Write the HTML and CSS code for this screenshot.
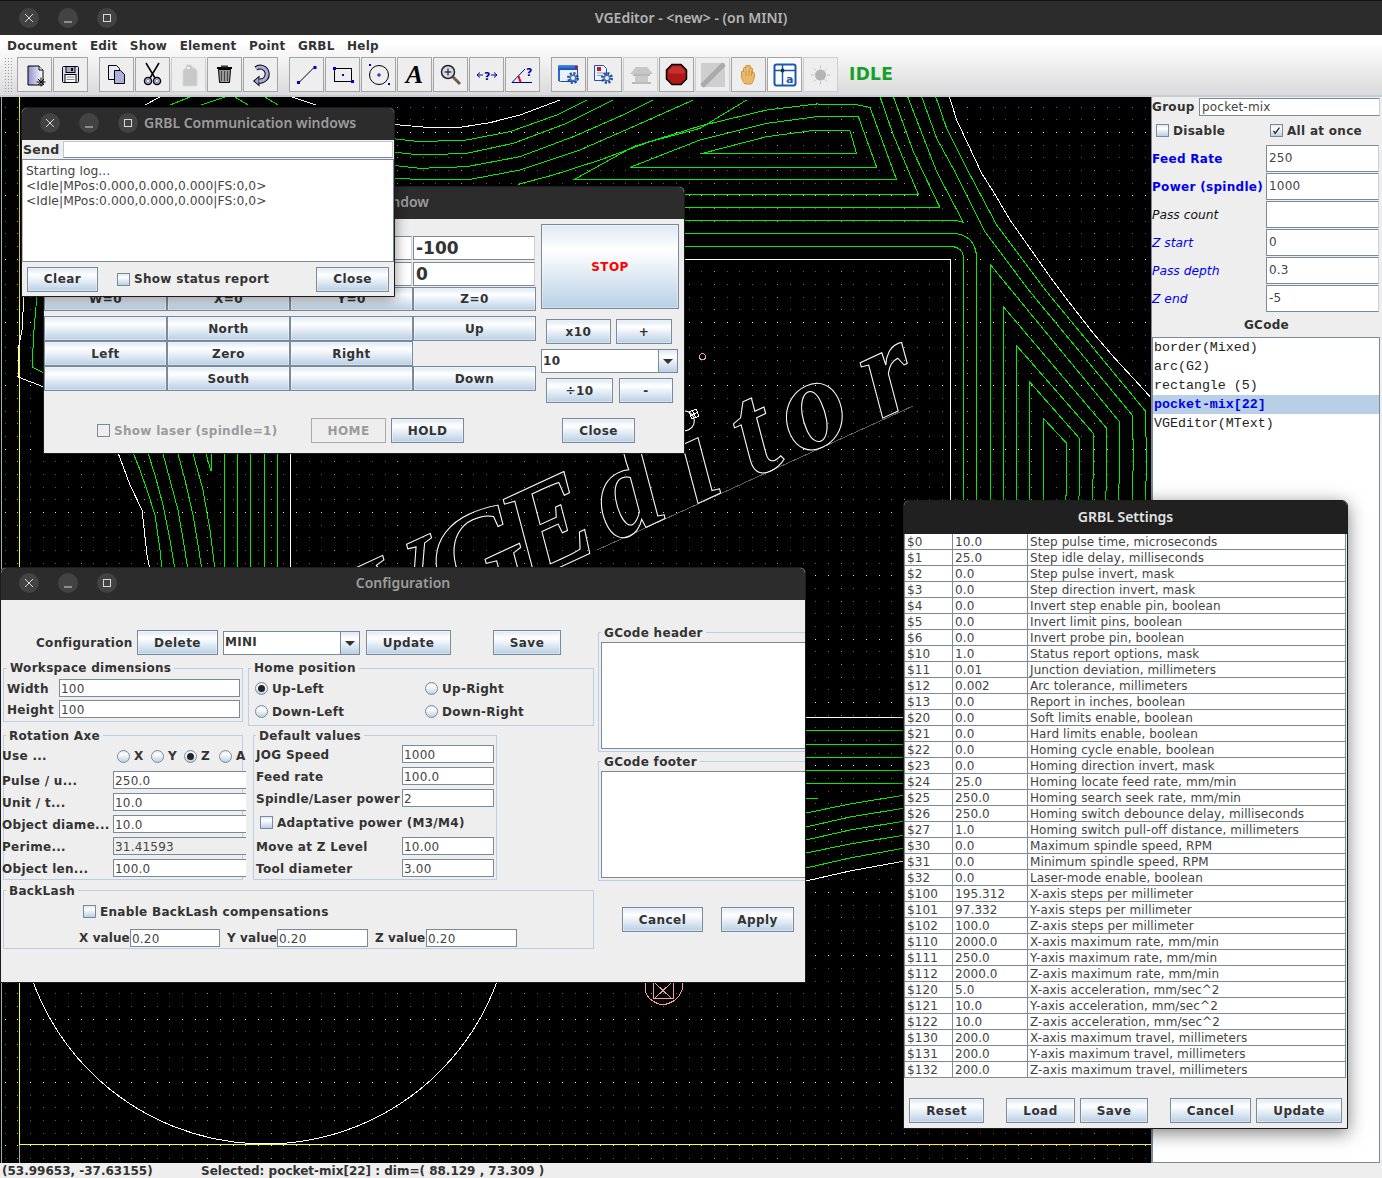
FILE: index.html
```html
<!DOCTYPE html>
<html lang="en">
<head>
<meta charset="utf-8">
<title>VGEditor</title>
<link rel="stylesheet" href="styles.css">
</head>
<body>
<div class="app">
  <svg class="defs" aria-hidden="true">
    <defs>
      <linearGradient id="lav" x1="0" y1="0" x2="1" y2="0"><stop offset="0" stop-color="#8f8fd0"/><stop offset="1" stop-color="#ffffff"/></linearGradient>
      <linearGradient id="blu" x1="0" y1="0" x2="0" y2="1"><stop offset="0" stop-color="#4a90e8"/><stop offset="1" stop-color="#1448b8"/></linearGradient>
      <pattern id="grid" patternUnits="userSpaceOnUse" x="144" y="132" width="38" height="38">
        <g class="dot-dim">
          <rect x="0" y="0" width="1" height="1"/><rect x="13" y="0" width="1" height="1"/><rect x="25" y="0" width="1" height="1"/>
          <rect x="0" y="13" width="1" height="1"/><rect x="13" y="13" width="1" height="1"/><rect x="25" y="13" width="1" height="1"/>
          <rect x="0" y="25" width="1" height="1"/><rect x="13" y="25" width="1" height="1"/><rect x="25" y="25" width="1" height="1"/>
        </g>
      </pattern>
      <pattern id="gridrows" patternUnits="userSpaceOnUse" x="144" y="132" width="38" height="190">
        <g class="dot-hi">
          <rect x="0" y="0" width="1" height="1"/><rect x="13" y="0" width="1" height="1"/><rect x="25" y="0" width="1" height="1"/>
          <rect x="0" y="63" width="1" height="1"/><rect x="13" y="63" width="1" height="1"/><rect x="25" y="63" width="1" height="1"/>
          <rect x="0" y="127" width="1" height="1"/><rect x="13" y="127" width="1" height="1"/><rect x="25" y="127" width="1" height="1"/>
        </g>
      </pattern>
      <pattern id="gridcols" patternUnits="userSpaceOnUse" x="144" y="132" width="190" height="38">
        <g class="dot-mid">
          <rect x="0" y="0" width="1" height="1"/><rect x="0" y="13" width="1" height="1"/><rect x="0" y="25" width="1" height="1"/>
          <rect x="63" y="0" width="1" height="1"/><rect x="63" y="13" width="1" height="1"/><rect x="63" y="25" width="1" height="1"/>
          <rect x="127" y="0" width="1" height="1"/><rect x="127" y="13" width="1" height="1"/><rect x="127" y="25" width="1" height="1"/>
        </g>
      </pattern>
    </defs>
  </svg>

  <header class="titlebar main-title">
    <div class="wbtns">
      <span class="wbtn"><svg viewBox="0 0 20 20"><path d="M6 6l8 8M14 6l-8 8"/></svg></span>
      <span class="wbtn"><svg viewBox="0 0 20 20"><path d="M6 14h8"/></svg></span>
      <span class="wbtn"><svg viewBox="0 0 20 20"><rect x="6.500" y="6.500" width="7" height="7"/></svg></span>
    </div>
    <div class="wtitle">VGEditor - &lt;new&gt; - (on MINI)</div>
    <div></div>
  </header>

  <div class="chrome">
    <nav class="menubar">
      <span>Document</span><span>Edit</span><span>Show</span><span>Element</span><span>Point</span><span>GRBL</span><span>Help</span>
    </nav>
    <div class="toolbar">
      <div class="grip"></div>
      <div class="tgroup">
        <button class="tool"><svg viewBox="0 0 33 33"><path d="M10 8h11l4 4v15H10z" fill="url(#lav)" stroke="#000"/><path d="M21 8v4h4" fill="#fff" stroke="#000"/><path d="M23 19.500v9M18.500 24h9M20 21l6 6M26 21l-6 6" stroke="#000" fill="none"/></svg></button>
        <button class="tool"><svg viewBox="0 0 33 33"><path d="M8.500 9.500a1 1 0 0 1 1-1h14a1 1 0 0 1 1 1v14a1 1 0 0 1-1 1h-14a1 1 0 0 1-1-1z" fill="#dcdcec" stroke="#000"/><rect x="12" y="8.500" width="9" height="6" fill="#a8a8d0" stroke="#000"/><rect x="17" y="10" width="2" height="3" fill="#000"/><rect x="11" y="16.500" width="11" height="8" fill="#fff" stroke="#000"/><path d="M12.500 19h8M12.500 21.500h8" stroke="#888"/></svg></button>
      </div>
      <div class="tgroup">
        <button class="tool"><svg viewBox="0 0 33 33"><path d="M8.500 7.500h8l3 3v11h-11z" fill="#e8e8f4" stroke="#000"/><path d="M14.500 12.500h6l4 4v9h-10z" fill="#b0b0dc" stroke="#000"/></svg></button>
        <button class="tool"><svg viewBox="0 0 33 33"><path d="M10 5l9 15M23 5l-9 15" stroke="#000" stroke-width="1.500" fill="none"/><circle cx="12" cy="23" r="3.500" fill="none" stroke="#000" stroke-width="1.500"/><circle cx="21" cy="23" r="3.500" fill="none" stroke="#000" stroke-width="1.500"/><circle cx="12" cy="23" r="1.800" fill="none" stroke="#7878c8"/><circle cx="21" cy="23" r="1.800" fill="none" stroke="#7878c8"/></svg></button>
        <button class="tool off"><svg viewBox="0 0 33 33"><path d="M14 7h5l2 3h2l2 3v14a1 1 0 0 1-1 1h-12a1 1 0 0 1-1-1v-14l2-3h2z" fill="#c8c8c8" stroke="#d8d8d8"/><rect x="15" y="9" width="3" height="2" fill="#eee"/></svg></button>
        <button class="tool"><svg viewBox="0 0 33 33"><rect x="9" y="9" width="15" height="2" fill="#000"/><rect x="13" y="7.500" width="7" height="2" fill="#333"/><path d="M10.500 11.500h12l-1 13h-10z" fill="#999" stroke="#000"/><path d="M13.500 13v10M16.500 13v10M19.500 13v10" stroke="#444"/></svg></button>
        <button class="tool"><svg viewBox="0 0 33 33"><path d="M12 10.500a7 7 0 1 1 3 12.500" fill="none" stroke="#000" stroke-width="5"/><path d="M15.500 17.500v11l-6.500-5.500z" fill="#000"/><path d="M12 10.500a7 7 0 1 1 3 12.500" fill="none" stroke="#a8a8dc" stroke-width="3"/><path d="M14.500 19.500v7l-4-3.500z" fill="#a8a8dc"/></svg></button>
      </div>
      <div class="tgroup">
        <button class="tool"><svg viewBox="0 0 33 33"><path d="M9 24.500L24 9.500" stroke="#000" fill="none"/><rect x="7" y="23" width="3" height="3" fill="#00c"/><rect x="23.500" y="8" width="3" height="3" fill="#00c"/></svg></button>
        <button class="tool"><svg viewBox="0 0 33 33"><rect x="8.500" y="10.500" width="17" height="13" fill="none" stroke="#000"/><rect x="7" y="9" width="3" height="3" fill="#00c"/><rect x="25" y="22" width="3" height="3" fill="#00c"/><rect x="16" y="16" width="2" height="2" fill="#00c"/></svg></button>
        <button class="tool"><svg viewBox="0 0 33 33"><circle cx="17" cy="17" r="9.500" fill="none" stroke="#000"/><rect x="7" y="6" width="2" height="2" fill="#00c"/><rect x="26" y="25" width="2" height="2" fill="#00c"/><path d="M15 17h4M17 15v4" stroke="#00c"/></svg></button>
        <button class="tool"><span class="glyph-a">A</span></button>
        <button class="tool"><svg viewBox="0 0 33 33"><path d="M19 19l7 7" stroke="#7a5848" stroke-width="3" fill="none"/><circle cx="14" cy="14" r="6.500" fill="#d8d8ec" stroke="#222" stroke-width="1.500"/><path d="M10.500 14h7M14 10.500v7" stroke="#000" fill="none"/></svg></button>
        <button class="tool"><svg viewBox="0 0 33 33"><path d="M7 17h6M7 17l3-2.500M7 17l3 2.500M21 17h6M27 17l-3-2.500M27 17l-3 2.500" stroke="#009" fill="none"/><text x="14" y="22" class="svg-q">?</text></svg></button>
        <button class="tool"><svg viewBox="0 0 33 33"><path d="M6 24.500h20M6 24.500L19 11" stroke="#009" fill="none"/><path d="M12.500 18l2 6" stroke="#e00" stroke-width="2" fill="none"/><text x="20" y="18" class="svg-q">?</text></svg></button>
      </div>
      <div class="tgroup">
        <button class="tool"><svg viewBox="0 0 33 33"><rect x="6.500" y="7.500" width="19" height="16" rx="2" fill="#eaf2ff" stroke="#1448b8"/><rect x="6" y="7" width="20" height="5" rx="1" fill="url(#blu)"/><rect x="23" y="8" width="2.500" height="2.500" fill="#d00"/><rect x="6" y="12" width="2" height="11" fill="#2a68d0"/><circle cx="21" cy="20" r="4.500" fill="none" stroke="#2c4c88" stroke-width="3" stroke-dasharray="2 1.500"/><circle cx="21" cy="20" r="2.800" fill="#e8f0fa" stroke="#4070c0" stroke-width="1.500"/></svg></button>
        <button class="tool"><svg viewBox="0 0 33 33"><path d="M6.500 7.500h9l3 3v12h-12z" fill="#eef2ff" stroke="#2050a8"/><rect x="9" y="9" width="4" height="4" fill="#d01818"/><path d="M9 15h7M9 17.500h6" stroke="#88a0d0"/><circle cx="19" cy="20" r="4.500" fill="none" stroke="#2c4c88" stroke-width="3" stroke-dasharray="2 1.500"/><circle cx="19" cy="20" r="2.800" fill="#e8f0fa" stroke="#4070c0" stroke-width="1.500"/></svg></button>
        <button class="tool off"><svg viewBox="0 0 33 33"><path d="M6 16l6-7h11l6 7z" fill="#c6c6c6"/><rect x="9" y="16" width="17" height="2" fill="#b8b8b8"/><rect x="11" y="18" width="13" height="8" fill="#cacaca"/><rect x="8" y="24" width="19" height="2" fill="#bbb"/></svg></button>
        <button class="tool"><svg viewBox="0 0 33 33"><path d="M12 6.500h9l5.500 5.500v9l-5.500 5.500h-9L6.500 21v-9z" fill="#b01818" stroke="#000" stroke-width="1.500"/><path d="M12.500 8.500h8l4 4v3H8.500v-3z" fill="#c83030"/></svg></button>
        <button class="tool off"><svg viewBox="0 0 33 33"><rect x="5" y="5" width="24" height="24" fill="#cecece"/><path d="M6 28L28 6" stroke="#aaa" stroke-width="5" fill="none"/></svg></button>
        <button class="tool"><svg viewBox="0 0 33 33"><path d="M13 26c-2-2-3.500-5-3.500-8v-4a1 1 0 0 1 2 0v-3.500a1 1 0 0 1 2 0V8.500a1.200 1.200 0 0 1 2.500 0v0a1.200 1.200 0 0 1 2.500 0V11a1 1 0 0 1 2 0v4.500a1 1 0 0 1 2 0c.3 4-1 7.500-3 10.500z" fill="#eab868" stroke="#c89848"/><path d="M14 13v5M17 12v6M19.500 13v5" stroke="#c89848" fill="none"/></svg></button>
        <button class="tool face"><svg viewBox="0 0 33 33"><rect x="6.500" y="6.500" width="21" height="21" rx="2" fill="#fff" stroke="#1a58b0" stroke-width="2"/><path d="M6 12.500h22M14.500 7v20" stroke="#1a58b0" fill="none" stroke-width="1.500"/><circle cx="14.500" cy="12.500" r="2" fill="#234"/><text x="18" y="25" class="svg-a">a</text></svg></button>
        <button class="tool off"><svg viewBox="0 0 33 33"><circle cx="16.500" cy="17" r="5.500" fill="#b4b4b4"/><path d="M16.500 7.500v3M16.500 23.500v3M7 17h3M23 17h3M10 10.500l2 2M21 21.500l2 2M23 10.500l-2 2M12 21.500l-2 2" stroke="#c0c0c0" fill="none"/></svg></button>
      </div>
      <div class="idle">IDLE</div>
    </div>
  </div>

  <main class="work">
    <div class="canvas">
      <svg class="drawing" viewBox="0 97 1151 1066" width="1151" height="1066">
        <rect x="0" y="97" width="1151" height="1066" fill="#000"/>
        <rect x="0" y="97" width="1151" height="1066" fill="url(#grid)"/>
        <rect x="0" y="97" width="1151" height="1066" fill="url(#gridcols)"/>
        <rect x="0" y="97" width="1151" height="1066" fill="url(#gridrows)"/>
        <path class="frame" d="M1.500 97V1163"/>
        <path class="axis" d="M19.500 97V1144.500H1151"/>
        <path class="frame" d="M19.500 1145V1163"/>

        <!-- pocket: upper edge, traced on a 3x grid -->
        <g transform="translate(400 100) scale(.33333)">
          <path class="w" d="M-30 72L0 75L80 82L180 82L270 68L360 45L480 0"/>
          <path class="g" d="M-30 115L60 125L200 120L330 95L470 45L560 0"/>
          <path class="g" d="M-30 155L60 165L200 160L340 130L500 70L640 0"/>
          <path class="g" d="M-30 195L60 205L200 200L360 170L520 110L680 40L760 0"/>
          <path class="g" d="M-30 236L200 240L360 210L540 150L700 80L880 0"/>
          <path class="g" d="M355 253L460 225L600 180L750 125L900 85L1040 0"/>
          <path class="g" d="M520 240H1490L1410 22L1370 14L1250 12L1100 30L900 78L700 140L520 240"/>
          <path class="g" d="M690 202H1430L1375 50L1250 50L1100 70L900 120L690 202"/>
          <path class="g" d="M900 162H1370L1350 92L1250 90L1100 110L900 162"/>
        </g>

        <!-- pocket: right side, traced on a 3x grid -->
        <g transform="translate(680 95) scale(.33333)">
          <path class="w" d="M808 5L830 75L870 160L905 235L940 290L990 375L1050 460L1110 545L1170 625L1240 715L1300 785L1360 850L1410 905"/>
          <path class="w" d="M0 495H812V1250"/>
          <path class="g" d="M0 455H820Q850 460 850 490V1250"/>
          <path class="g" d="M0 415H820Q888 420 890 490V1250"/>
          <path class="g" d="M0 377H830L850 382L770 230L683 5"/>
          <path class="g" d="M0 338H780L700 170L640 5"/>
          <path class="g" d="M0 298H715L640 120L600 5"/>
          <path class="g" d="M725 5L770 130L830 240L915 410L1050 590L1358 962L1360 1100L1355 1250"/>
          <path class="g" d="M767 5L800 100L860 220L950 390L1100 590L1396 948L1400 1100L1395 1250"/>
          <path class="g" d="M932 1250V510L1318 980V1130L1315 1250"/>
          <path class="g" d="M970 1250V635L1280 1000V1150L1275 1250"/>
          <path class="g" d="M1010 1250V752L1240 1015V1130L1235 1250"/>
          <path class="g" d="M1050 1250V862L1200 1032V1140L1195 1250"/>
          <path class="g" d="M1090 1250V970L1160 1045V1170L1155 1250"/>
        </g>

        <!-- pocket: lower edge between the windows -->
        <path class="w" d="M800 717H910"/>
        <path class="g" d="M800 730H910M800 744H910M800 757H910M800 770H910M800 783H910M806 798H818"/>
        <path class="g" d="M806 813L850 804L905 795M806 827L850 817L905 808M806 840L850 830L905 821M806 853L850 844L905 835M806 868L850 858L905 848"/>
        <path class="w" d="M806 881L850 871L905 861"/>

        <!-- pocket: left edge -->
        <path class="w" d="M117 450L130 485L142 510L147 555L150 570"/>
        <path class="g" d="M132 450L140 470L147 490L155 515L160 550L162 570"/>
        <path class="g" d="M147 450L155 475L163 505L170 540L175 570"/>
        <path class="g" d="M162 450L170 480L178 510L184 545L188 570"/>
        <path class="g" d="M177 450L185 480L193 515L198 545L202 570"/>
        <path class="g" d="M192 450L203 490L210 530L215 570"/>
        <path class="g" d="M205 450L211 471V450"/>
        <path class="g" d="M224 450V570M237 450V570M250 450V570M264 450V570M277 450V570"/>
        <path class="w" d="M290 450V570"/>
        <path class="w" d="M24 295L22 330L19 345L18 377L44 387"/>
        <path class="g" d="M37 295L34 330L32 367L44 373"/>
        <path class="w" d="M145 105L160 97M292 97L316 105"/>
        <path class="g" d="M170 105L190 97M201 105L225 97M235 97L248 105M265 97L278 105"/>

        <!-- text element -->
        <path class="base" d="M597 550L913 406"/>
        <text class="mtext" transform="translate(597 550) rotate(-24.8)" x="-240 -160 -78 18 108 172 222 312">VGEditor</text>

        <!-- arc element -->
        <circle class="w" cx="265" cy="897" r="247"/>

        <!-- markers -->
        <circle class="pink" cx="702.500" cy="356.500" r="3"/>
        <path class="w" d="M689 412L696 409L699 416L692 419zM692.500 410.500L695.500 417.500M690.500 415.500L697.500 412.500"/>
        <path class="pink" d="M645 983V990Q648 1002 663 1005Q678 1002 682 990V983"/>
        <path class="pink" d="M653 983V998H673V983M655 983L671 998M671 983L655 998"/>
      </svg>
    </div>

    <aside class="panel">
      <div class="group-row"><span class="lbl">Group</span><div class="field grp">pocket-mix</div></div>
      <div class="check-row">
        <span class="check-item"><span class="chk"></span><span class="lbl">Disable</span></span>
        <span class="check-item"><span class="chk on"><svg viewBox="0 0 13 13"><path d="M3 7l2 3 5-7" fill="none" stroke="#222" stroke-width="1.500"/></svg></span><span class="lbl">All at once</span></span>
      </div>
      <div class="props">
        <span class="lbl blue">Feed Rate</span><div class="field pf">250</div>
        <span class="lbl blue">Power (spindle)</span><div class="field pf">1000</div>
        <span class="ital">Pass count</span><div class="field pf"></div>
        <span class="ital blue">Z start</span><div class="field pf">0</div>
        <span class="ital blue">Pass depth</span><div class="field pf">0.3</div>
        <span class="ital blue">Z end</span><div class="field pf">-5</div>
      </div>
      <div class="gc-head lbl">GCode</div>
      <ul class="gc-list">
        <li>border(Mixed)</li>
        <li>arc(G2)</li>
        <li>rectangle (5)</li>
        <li class="sel">pocket-mix[22]</li>
        <li>VGEditor(MText)</li>
      </ul>
    </aside>
  </main>

  <footer class="status">
    <span class="st-pos">(53.99653, -37.63155)</span>
    <span>Selected: pocket-mix[22] : dim=( 88.129 , 73.309 )</span>
  </footer>

  <!-- Jog window -->
  <section class="win jog">
    <div class="titlebar">
      <div class="wtitle off jog-title">GRBL Jogging control window</div>
    </div>
    <div class="jog-main">
      <div class="jog-left">
        <div class="jog-grid jog-fields">
          <div class="field big"></div><div class="field big"></div><div class="field big"></div><div class="field big">-100</div>
          <div class="field big"></div><div class="field big"></div><div class="field big"></div><div class="field big">0</div>
        </div>
        <div class="jog-grid zero-row">
          <button class="btn">W=0</button><button class="btn">X=0</button><button class="btn">Y=0</button><button class="btn">Z=0</button>
        </div>
        <div class="jog-grid pad-rows">
          <button class="btn"></button><button class="btn">North</button><button class="btn"></button><button class="btn">Up</button>
          <button class="btn">Left</button><button class="btn">Zero</button><button class="btn">Right</button><span></span>
          <button class="btn"></button><button class="btn">South</button><button class="btn"></button><button class="btn">Down</button>
        </div>
      </div>
      <div class="jog-right">
        <button class="btn stop">STOP</button>
        <div class="step-row"><button class="btn w65">x10</button><button class="btn w56">+</button></div>
        <div class="combo jog-combo"><span class="combo-val">10</span><span class="combo-arrow"></span></div>
        <div class="step-row"><button class="btn w67">÷10</button><button class="btn w54">-</button></div>
      </div>
    </div>
    <div class="jog-bottom">
      <span class="check-item dis"><span class="chk plain"></span><span class="lbl">Show laser (spindle=1)</span></span>
      <button class="btn dis w75">HOME</button>
      <button class="btn w73">HOLD</button>
      <button class="btn w73">Close</button>
    </div>
  </section>

  <!-- Configuration window -->
  <section class="win config">
    <div class="titlebar center">
      <div class="wbtns">
        <span class="wbtn"><svg viewBox="0 0 20 20"><path d="M6 6l8 8M14 6l-8 8"/></svg></span>
        <span class="wbtn"><svg viewBox="0 0 20 20"><path d="M6 14h8"/></svg></span>
        <span class="wbtn"><svg viewBox="0 0 20 20"><rect x="6.500" y="6.500" width="7" height="7"/></svg></span>
      </div>
      <div class="wtitle off">Configuration</div>
      <div></div>
    </div>
    <div class="cfg-body">
      <div class="cfg-left">
        <div class="cfg-top">
          <span class="lbl cfg-lbl">Configuration</span>
          <button class="btn w81">Delete</button>
          <div class="combo cfg-combo"><span class="combo-val">MINI</span><span class="combo-arrow"></span></div>
          <button class="btn w85">Update</button>
          <button class="btn w68 save">Save</button>
        </div>
        <div class="cfg-row r1">
          <div class="fs wksp">
            <div class="legend">Workspace dimensions</div>
            <div class="wksp-grid">
              <span class="lbl">Width</span><div class="field sf">100</div>
              <span class="lbl">Height</span><div class="field sf">100</div>
            </div>
          </div>
          <div class="fs home">
            <div class="legend">Home position</div>
            <div class="home-grid">
              <span class="check-item"><span class="rad on"></span><span class="lbl">Up-Left</span></span>
              <span class="check-item"><span class="rad"></span><span class="lbl">Up-Right</span></span>
              <span class="check-item"><span class="rad"></span><span class="lbl">Down-Left</span></span>
              <span class="check-item"><span class="rad"></span><span class="lbl">Down-Right</span></span>
            </div>
          </div>
        </div>
        <div class="cfg-row r2">
          <div class="fs rot">
            <div class="legend">Rotation Axe</div>
            <div class="rot-grid">
              <span class="lbl use">Use ...</span>
              <div class="axes">
                <span class="check-item ax34"><span class="rad"></span><span class="lbl">X</span></span>
                <span class="check-item ax33"><span class="rad"></span><span class="lbl">Y</span></span>
                <span class="check-item ax35"><span class="rad on"></span><span class="lbl">Z</span></span>
                <span class="check-item"><span class="rad"></span><span class="lbl">A</span></span>
              </div>
              <span class="lbl">Pulse / u...</span><div class="field sf open">250.0</div>
              <span class="lbl">Unit / t...</span><div class="field sf open">10.0</div>
              <span class="lbl">Object diame...</span><div class="field sf open">10.0</div>
              <span class="lbl">Perime...</span><div class="field sf open ro">31.41593</div>
              <span class="lbl">Object len...</span><div class="field sf open">100.0</div>
            </div>
          </div>
          <div class="fs defv">
            <div class="legend">Default values</div>
            <div class="def-grid">
              <span class="lbl">JOG Speed</span><div class="field sf">1000</div>
              <span class="lbl">Feed rate</span><div class="field sf">100.0</div>
              <span class="lbl">Spindle/Laser power</span><div class="field sf">2</div>
              <span class="check-item adapt"><span class="chk"></span><span class="lbl">Adaptative power (M3/M4)</span></span>
              <span class="lbl">Move at Z Level</span><div class="field sf">10.00</div>
              <span class="lbl">Tool diameter</span><div class="field sf">3.00</div>
            </div>
          </div>
        </div>
        <div class="fs back">
          <div class="legend">BackLash</div>
          <div class="back-check"><span class="check-item"><span class="chk"></span><span class="lbl">Enable BackLash compensations</span></span></div>
          <div class="back-vals">
            <span class="lbl">X value</span><div class="field sf">0.20</div>
            <span class="lbl">Y value</span><div class="field sf">0.20</div>
            <span class="lbl">Z value</span><div class="field sf">0.20</div>
          </div>
        </div>
      </div>
      <div class="cfg-right">
        <div class="fs gc">
          <div class="legend">GCode header</div>
          <div class="field gcta"></div>
        </div>
        <div class="fs gc second">
          <div class="legend">GCode footer</div>
          <div class="field gcta"></div>
        </div>
        <div class="cfg-actions">
          <button class="btn w81">Cancel</button>
          <button class="btn w73">Apply</button>
        </div>
      </div>
    </div>
  </section>

  <!-- Communication window -->
  <section class="win comm">
    <div class="titlebar">
      <div class="wbtns">
        <span class="wbtn"><svg viewBox="0 0 20 20"><path d="M6 6l8 8M14 6l-8 8"/></svg></span>
        <span class="wbtn"><svg viewBox="0 0 20 20"><path d="M6 14h8"/></svg></span>
        <span class="wbtn"><svg viewBox="0 0 20 20"><rect x="6.500" y="6.500" width="7" height="7"/></svg></span>
      </div>
      <div class="wtitle off left">GRBL Communication windows</div>
    </div>
    <div class="send-row"><span class="lbl">Send</span><div class="field send"></div></div>
    <div class="log">Starting log...<br>&lt;Idle|MPos:0.000,0.000,0.000|FS:0,0&gt;<br>&lt;Idle|MPos:0.000,0.000,0.000|FS:0,0&gt;</div>
    <div class="comm-bottom">
      <button class="btn w71">Clear</button>
      <span class="check-item status-chk"><span class="chk"></span><span class="lbl">Show status report</span></span>
      <button class="btn w73 push">Close</button>
    </div>
  </section>

  <!-- GRBL settings dialog -->
  <section class="win settings">
    <div class="titlebar solo"><div class="wtitle">GRBL Settings</div></div>
    <table class="grbl">
      <colgroup><col class="c1"><col class="c2"><col class="c3"></colgroup>
      <tbody>
        <tr><td>$0</td><td>10.0</td><td>Step pulse time, microseconds</td></tr>
        <tr><td>$1</td><td>25.0</td><td>Step idle delay, milliseconds</td></tr>
        <tr><td>$2</td><td>0.0</td><td>Step pulse invert, mask</td></tr>
        <tr><td>$3</td><td>0.0</td><td>Step direction invert, mask</td></tr>
        <tr><td>$4</td><td>0.0</td><td>Invert step enable pin, boolean</td></tr>
        <tr><td>$5</td><td>0.0</td><td>Invert limit pins, boolean</td></tr>
        <tr><td>$6</td><td>0.0</td><td>Invert probe pin, boolean</td></tr>
        <tr><td>$10</td><td>1.0</td><td>Status report options, mask</td></tr>
        <tr><td>$11</td><td>0.01</td><td>Junction deviation, millimeters</td></tr>
        <tr><td>$12</td><td>0.002</td><td>Arc tolerance, millimeters</td></tr>
        <tr><td>$13</td><td>0.0</td><td>Report in inches, boolean</td></tr>
        <tr><td>$20</td><td>0.0</td><td>Soft limits enable, boolean</td></tr>
        <tr><td>$21</td><td>0.0</td><td>Hard limits enable, boolean</td></tr>
        <tr><td>$22</td><td>0.0</td><td>Homing cycle enable, boolean</td></tr>
        <tr><td>$23</td><td>0.0</td><td>Homing direction invert, mask</td></tr>
        <tr><td>$24</td><td>25.0</td><td>Homing locate feed rate, mm/min</td></tr>
        <tr><td>$25</td><td>250.0</td><td>Homing search seek rate, mm/min</td></tr>
        <tr><td>$26</td><td>250.0</td><td>Homing switch debounce delay, milliseconds</td></tr>
        <tr><td>$27</td><td>1.0</td><td>Homing switch pull-off distance, millimeters</td></tr>
        <tr><td>$30</td><td>0.0</td><td>Maximum spindle speed, RPM</td></tr>
        <tr><td>$31</td><td>0.0</td><td>Minimum spindle speed, RPM</td></tr>
        <tr><td>$32</td><td>0.0</td><td>Laser-mode enable, boolean</td></tr>
        <tr><td>$100</td><td>195.312</td><td>X-axis steps per millimeter</td></tr>
        <tr><td>$101</td><td>97.332</td><td>Y-axis steps per millimeter</td></tr>
        <tr><td>$102</td><td>100.0</td><td>Z-axis steps per millimeter</td></tr>
        <tr><td>$110</td><td>2000.0</td><td>X-axis maximum rate, mm/min</td></tr>
        <tr><td>$111</td><td>250.0</td><td>Y-axis maximum rate, mm/min</td></tr>
        <tr><td>$112</td><td>2000.0</td><td>Z-axis maximum rate, mm/min</td></tr>
        <tr><td>$120</td><td>5.0</td><td>X-axis acceleration, mm/sec^2</td></tr>
        <tr><td>$121</td><td>10.0</td><td>Y-axis acceleration, mm/sec^2</td></tr>
        <tr><td>$122</td><td>10.0</td><td>Z-axis acceleration, mm/sec^2</td></tr>
        <tr><td>$130</td><td>200.0</td><td>X-axis maximum travel, millimeters</td></tr>
        <tr><td>$131</td><td>200.0</td><td>Y-axis maximum travel, millimeters</td></tr>
        <tr><td>$132</td><td>200.0</td><td>Z-axis maximum travel, millimeters</td></tr>
      </tbody>
    </table>
    <div class="set-actions">
      <button class="btn w75">Reset</button>
      <button class="btn w69 gap22">Load</button>
      <button class="btn w68">Save</button>
      <button class="btn w81 gap22">Cancel</button>
      <button class="btn w86">Update</button>
    </div>
  </section>
</div>
</body>
</html>
```

FILE: styles.css
```css
* { box-sizing: border-box; }
html, body { margin: 0; padding: 0; background: #eee; }
body { width: 1382px; height: 1178px; overflow: hidden; }
.app {
  position: relative;
  width: 1382px;
  height: 1178px;
  overflow: hidden;
  display: flex;
  flex-direction: column;
  background: #eee;
  color: #333;
  font: bold 12px/16px "DejaVu Sans", sans-serif;
  letter-spacing: .3px;
}
.defs { position: absolute; width: 0; height: 0; }
.dot-dim { fill: #5e5e5e; }
.dot-mid { fill: #9a9a9a; }
.dot-hi { fill: #e8e8e8; }

/* title bars */
.titlebar {
  display: flex;
  align-items: center;
  flex: none;
  height: 32px;
  background: #2c2c2c;
  padding: 0 18px 2px;
  font: 600 14px/20px "Noto Sans", sans-serif;
  letter-spacing: 0;
}
.main-title {
  display: grid;
  grid-template-columns: 1fr auto 1fr;
  height: 35px;
  border-top: 1px solid #111;
  padding: 0 19px 1px;
}
.center { display: grid; grid-template-columns: 1fr auto 1fr; }
.solo { justify-content: center; padding: 0 0 2px; background: #202020; height: 33px; }
.solo .wtitle { color: #e4e4e4; }
.wtitle { color: #b4b4b4; white-space: nowrap; }
.wtitle.off { color: #9c9c9c; }
.wtitle.left { margin-left: 6px; }
.wbtns { display: flex; gap: 19px; }
.wbtn { display: block; width: 20px; height: 20px; border-radius: 50%; background: #434343; }
.wbtn svg { display: block; width: 20px; height: 20px; fill: none; stroke: #d8d8d8; stroke-width: 1; }
.jog-title { width: 385px; text-align: right; margin-left: -18px; }

/* menu + toolbar */
.chrome {
  flex: none;
  height: 62px;
  background: linear-gradient(#fff, #fff 12%, #dcdcdc 95%);
  border-bottom: 2px solid #c4ccd4;
}
.menubar { display: flex; gap: 12.500px; height: 22px; padding: 0 0 0 7px; align-items: center; letter-spacing: .2px; }
.toolbar { display: flex; height: 36px; padding-left: 4px; align-items: flex-start; }
.grip {
  width: 9px;
  height: 36px;
  margin-right: 4px;
  background: radial-gradient(circle, #9a9a9a .7px, transparent 1px) 0 0 / 3px 3px;
}
.tgroup { display: flex; gap: 1px; margin-right: 11px; }
.tool {
  display: flex;
  align-items: center;
  justify-content: center;
  width: 35px;
  height: 35px;
  padding: 0;
  background: #eee;
  border: 1.5px solid #a4a4a4;
}
.tool svg { display: block; width: 33px; height: 33px; flex: none; }
.tool.off { border-color: #cdcdcd; }
.tool.face { background: #fafafa; }
.glyph-a { font: italic bold 26px/1 "Liberation Serif", serif; color: #000; }
.svg-q { font: bold 11px "DejaVu Sans", sans-serif; fill: #009; }
.svg-a { font: bold 11px "DejaVu Sans", sans-serif; fill: #1a58b0; }
.idle { font-size: 17px; line-height: 35px; color: #14a028; letter-spacing: .3px; }

/* work area */
.work { flex: 1 1 auto; display: flex; min-height: 0; }
.canvas { width: 1151px; flex: none; background: #000; }
.drawing { display: block; }
.drawing path, .drawing circle { shape-rendering: crispEdges; }
.g, .w, .axis, .frame, .base, .pink { fill: none; vector-effect: non-scaling-stroke; stroke-width: 1; }
.g { stroke: #00f000; }
.w { stroke: #fff; }
.axis { stroke: #ffff20; }
.frame { stroke: #a0a8b0; }
.base { stroke: #606060; }
.pink { stroke: #f0a0a0; }
.mtext {
  font: italic bold 130px "Liberation Serif", serif;
  letter-spacing: 0;
  fill: none;
  stroke: #fff;
  stroke-width: 1;
}

/* side panel */
.panel {
  flex: 1 1 auto;
  display: flex;
  flex-direction: column;
  border-left: 1px solid #7a8a99;
  min-width: 0;
}
.group-row { display: flex; height: 18px; align-items: center; padding-top: 1px; }
.group-row .lbl { width: 47px; }
.grp { width: 181px; height: 18px; }
.check-row { display: grid; grid-template-columns: 114px 1fr; height: 29px; align-items: center; padding: 2px 0 0 4px; }
.props { display: grid; grid-template-columns: 114px 113px; grid-auto-rows: 28px; align-items: center; }
.props .lbl, .props .ital { padding-top: 1px; }
.pf { height: 27px; line-height: 24px; color: #222; padding-left: 1px; }
.blue { color: #0000f0; }
.ital { font-weight: normal; font-style: italic; color: #111; letter-spacing: 0; font-size: 12.300px; }
.ital.blue { color: #0000f0; }
.gc-head { height: 25px; line-height: 26px; text-align: center; padding-right: 1px; }
.gc-list {
  list-style: none;
  margin: 0;
  padding: 0;
  flex: 1 1 auto;
  width: 228px;
  background: #fff;
  border: 1px solid #7a8a99;
}
.gc-list li {
  height: 19px;
  padding-left: 1px;
  font: 13.300px/19px "Liberation Mono", monospace;
  letter-spacing: 0;
  color: #222;
}
.gc-list .sel { background: #b8cfe5; color: #0000f0; font-weight: bold; }

.status {
  flex: none;
  height: 15px;
  display: flex;
  padding: 1px 0 0 2px;
  font-size: 12px;
  line-height: 14px;
  letter-spacing: 0;
}
.st-pos { width: 199px; }

/* shared controls */
.lbl { white-space: nowrap; }
.field {
  background: #fff;
  border: 1px solid #7a8a99;
  border-right-color: #c8d0d8;
  border-bottom-color: #7a8a99;
  padding-left: 2px;
  font-weight: normal;
  font-size: 12px;
  letter-spacing: .2px;
  color: #444;
  white-space: nowrap;
  overflow: hidden;
}
.sf { height: 18px; line-height: 19px; border-right-color: #7a8a99; padding-left: 1px; }
.open { border-right: 0; }
.ro { background: #eee; }
.big { height: 24px; line-height: 22px; font-size: 17px; font-weight: bold; color: #333; padding-left: 2px; letter-spacing: 0; }
.btn {
  display: block;
  height: 25px;
  padding: 0;
  border: 1px solid #7a8a99;
  background: linear-gradient(#dde8f3, #fff 30%, #b8cfe5);
  box-shadow: inset 0 0 0 1px rgba(255, 255, 255, .35);
  color: #333;
  font: bold 12px/22px "DejaVu Sans", sans-serif;
  letter-spacing: .45px;
  white-space: nowrap;
}
.btn.dis { background: #eee; border-color: #aaa; color: #9a9a9a; box-shadow: none; }
.w54 { width: 54px; } .w56 { width: 56px; } .w65 { width: 65px; } .w67 { width: 67px; }
.w68 { width: 68px; } .w69 { width: 69px; } .w71 { width: 71px; } .w73 { width: 73px; }
.w75 { width: 75px; } .w81 { width: 81px; } .w85 { width: 85px; } .w86 { width: 86px; }
.check-item { display: inline-flex; align-items: center; gap: 4px; white-space: nowrap; }
.chk {
  display: block;
  flex: none;
  width: 13px;
  height: 13px;
  border: 1px solid #7a8a99;
  background: linear-gradient(#dde8f3, #fff 30%, #b8cfe5);
}
.chk svg { display: block; width: 11px; height: 11px; }
.chk.plain { background: #eee; }
.rad {
  position: relative;
  display: block;
  flex: none;
  width: 13px;
  height: 13px;
  border: 1px solid #7a8a99;
  border-radius: 50%;
  background: linear-gradient(#dde8f3, #fff 30%, #b8cfe5);
}
.rad.on::after {
  content: "";
  position: absolute;
  left: 2px;
  top: 2px;
  width: 7px;
  height: 7px;
  border-radius: 50%;
  background: #222;
}
.combo {
  display: flex;
  height: 24px;
  border: 1px solid #7a8a99;
  background: #fff;
}
.combo-val { flex: 1 1 auto; padding-left: 1px; line-height: 20px; }
.jog-combo .combo-val { line-height: 22px; }
.combo-arrow {
  position: relative;
  flex: none;
  width: 19px;
  border-left: 1px solid #7a8a99;
  background: linear-gradient(#dde8f3, #fff 30%, #b8cfe5);
}
.combo-arrow::after {
  content: "";
  position: absolute;
  left: 4px;
  top: 9px;
  border: 5px solid transparent;
  border-top: 5px solid #333;
  border-bottom: 0;
}

/* windows */
.win {
  position: absolute;
  display: flex;
  flex-direction: column;
  background: #eee;
  border: 1px solid #1c1c1c;
  border-radius: 6px 6px 0 0;
  overflow: hidden;
}
.comm { left: 21px; top: 107px; width: 374px; height: 190px; box-shadow: 0 2px 14px rgba(0, 0, 0, .45); overflow: visible; }
.comm .titlebar, .jog .titlebar, .config .titlebar, .settings .titlebar { border-radius: 5px 5px 0 0; }
.jog { left: 43px; top: 186px; width: 642px; height: 268px; }
.config { left: 0; top: 567px; width: 806px; height: 416px; }
.settings { left: 903px; top: 500px; width: 445px; height: 629px; box-shadow: 0 4px 18px rgba(0, 0, 0, .5); overflow: visible; }

/* comm */
.send-row { display: flex; height: 18px; align-items: center; padding-top: 1px; }
.send-row .lbl { width: 41px; padding-left: 1px; font-size: 12.500px; }
.send { width: 330px; height: 17px; border-color: #c0c8d0 #c0c8d0 #7a8a99; }
.log {
  height: 103px;
  margin-top: 1px;
  background: #fff;
  border: 1px solid #7a8a99;
  border-left-color: #bbb;
  padding: 4px 0 0 3px;
  font-weight: normal;
  font-size: 12.300px;
  line-height: 15px;
  letter-spacing: .05px;
  color: #444;
}
.comm-bottom { display: flex; align-items: center; height: 34px; padding: 0 5px; }
.status-chk { margin-left: 19px; }
.push { margin-left: auto; }

/* jog */
.jog-main { display: flex; height: 184px; flex: none; }
.jog-left { width: 492px; padding-top: 17px; }
.jog-grid { display: grid; grid-template-columns: repeat(4, 123px); }
.jog-fields { grid-auto-rows: 24px; row-gap: 2px; }
.jog-fields .field { width: 122px; }
.zero-row { margin-top: 1px; }
.zero-row .btn { height: 24px; }
.pad-rows { margin-top: 5px; grid-auto-rows: 25px; }
.pad-rows .btn { height: 25px; }
.jog-right { display: flex; flex-direction: column; width: 138px; margin-left: 5px; padding-top: 5px; }
.stop { width: 138px; height: 85px; color: #f00; }
.step-row { display: flex; gap: 5px; padding-left: 5px; margin-top: 10px; }
.jog-combo { width: 137px; margin-top: 5px; }
.jog-combo + .step-row { margin-top: 5px; gap: 6px; }
.jog-bottom {
  display: grid;
  grid-template-columns: 214px 80px 171px 73px;
  padding-left: 53px;
  margin-top: 15px;
  align-items: center;
}
.dis { color: #9a9a9a; }

/* config */
.cfg-body { display: flex; flex: 1 1 auto; padding: 30px 0 0 2px; min-height: 0; }
.cfg-left { flex: none; width: 591px; }
.cfg-top { display: flex; height: 25px; align-items: center; padding-left: 33px; }
.cfg-lbl { width: 96px; }
.cfg-top .btn { margin-left: 5px; }
.cfg-combo { width: 137px; margin-left: 5px; }
.cfg-top .save { margin-left: 42px; }
.cfg-top .btn + .combo + .btn { margin-left: 6px; }
.cfg-row { display: flex; align-items: flex-start; }
.r1 { margin-top: 13px; height: 58px; }
.r2 { margin-top: 9px; height: 145px; }
.fs { border: 1px solid #b8cfe5; }
.legend {
  display: table;
  margin: -8px 0 0 2px;
  padding: 0 3px;
  height: 16px;
  background: #eee;
  white-space: nowrap;
}
.wksp { width: 240px; height: 54px; }
.wksp .legend { margin: -9px 0 0 3px; }
.home .legend { margin-top: -9px; }
.wksp-grid { display: grid; grid-template-columns: 52px 181px; row-gap: 3px; align-items: center; margin: 3px 0 0 3px; }
.wksp-grid .lbl { padding-top: 1px; }
.home { width: 346px; height: 58px; margin-left: 5px; }
.home-grid { display: grid; grid-template-columns: 170px 1fr; grid-auto-rows: 23px; align-items: center; margin: 1px 0 0 6px; }
.rot { width: 240px; height: 145px; }
.rot-grid {
  display: grid;
  grid-template-columns: 111px 133px;
  grid-template-rows: 22px repeat(5, 18px);
  row-gap: 4px;
  margin: 1px 0 0 -2px;
  align-items: center;
  width: 244px;
}
.rot-grid > .lbl, .def-grid > .lbl { padding-top: 1px; }
.rot-grid > .use { padding-top: 0; }
.axes { display: flex; padding-left: 4px; }
.ax34 { width: 34px; } .ax33 { width: 33px; } .ax35 { width: 35px; }
.defv { width: 244px; height: 145px; margin-left: 10px; }
.def-grid {
  display: grid;
  grid-template-columns: 146px 92px;
  grid-template-rows: 18px 18px 18px 22px 18px 18px;
  row-gap: 4px;
  margin: 1px 0 0 2px;
  align-items: center;
}
.adapt { grid-column: 1 / 3; padding: 1px 0 0 4px; }
.back { width: 591px; height: 59px; margin-top: 10px; }
.back-check { height: 25px; padding-left: 79px; display: flex; align-items: center; }
.back-vals {
  display: grid;
  grid-template-columns: 51px 90px 57px 91px 58px 91px;
  margin-top: 5px;
  padding-left: 75px;
  align-items: center;
}
.back-vals .lbl { letter-spacing: .1px; }
.back-vals .lbl:nth-child(3) { padding-left: 7px; }
.back-vals .lbl:nth-child(5) { padding-left: 7px; }
.cfg-right { flex: none; width: 212px; margin: -8px 0 0 4px; padding-top: 10px; overflow: hidden; }
.gc { width: 240px; height: 120px; }
.gcta { height: 107px; width: 230px; margin: 1px 0 0 2px; }
.gc.second { margin-top: 9px; }
.cfg-actions { display: flex; gap: 18px; margin: 26px 0 0 24px; }

/* settings */
.grbl {
  width: 442px;
  border-collapse: separate;
  border-spacing: 0;
  table-layout: fixed;
  flex: none;
  background: #fff;
  font-weight: normal;
  font-size: 12px;
  letter-spacing: .1px;
  color: #444;
}
.c1 { width: 49px; } .c2 { width: 75px; }
.grbl td {
  height: 16px;
  padding: 1px 0 0 2px;
  line-height: 14px;
  border-right: 1px solid #7a8a99;
  border-bottom: 1px solid #7a8a99;
  white-space: nowrap;
  overflow: hidden;
}
.grbl td:first-child { border-left: 1px solid #7a8a99; }
.set-actions { display: flex; gap: 5px; margin: 20px 0 0 5px; }
.gap22 { margin-left: 17px; }
```
